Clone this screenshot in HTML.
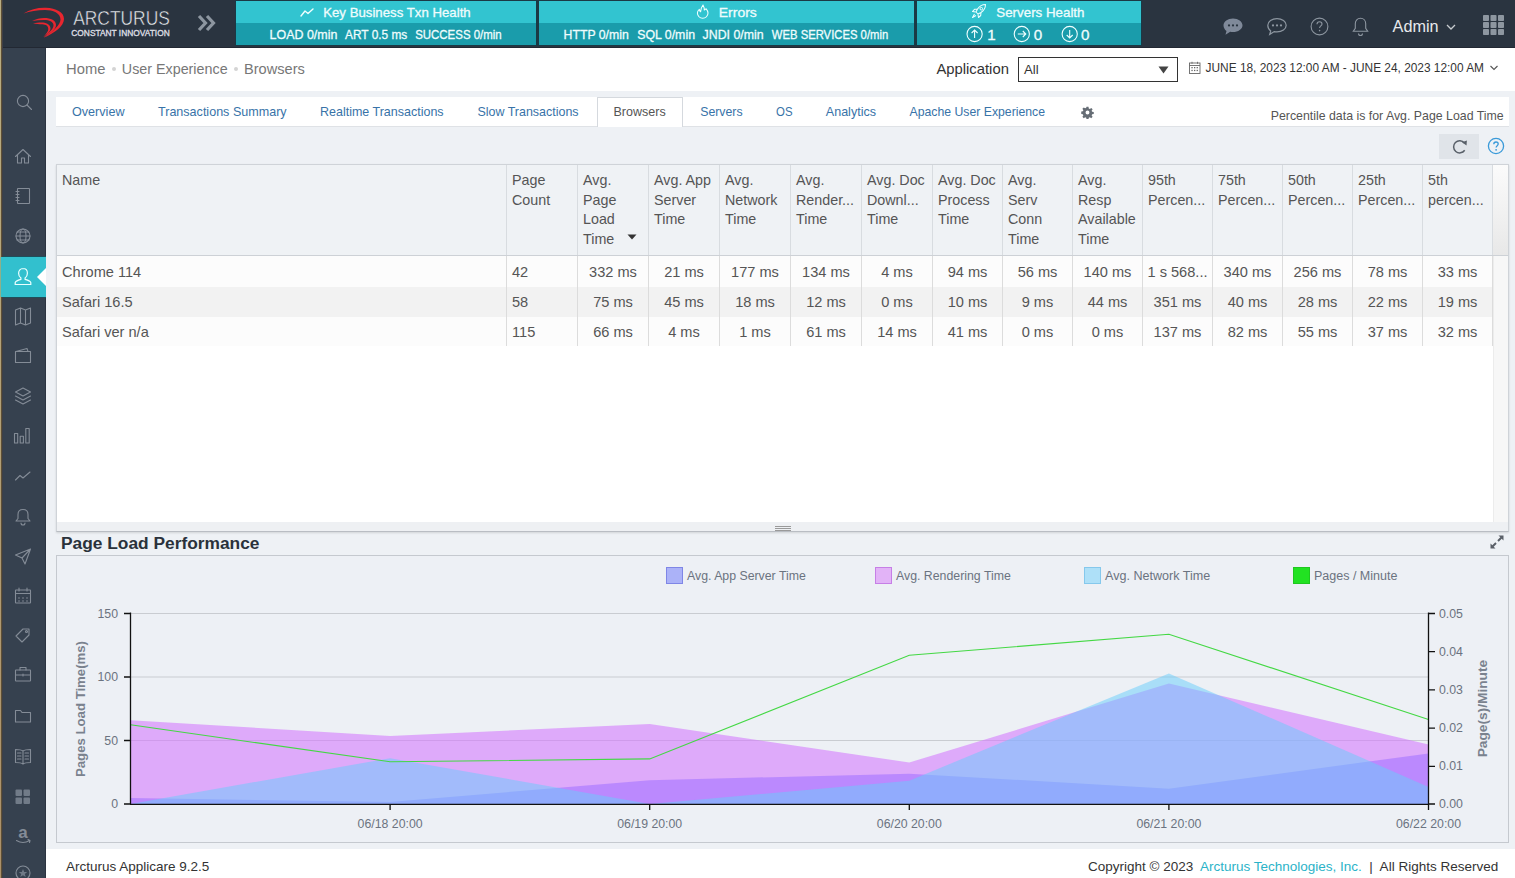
<!DOCTYPE html>
<html><head><meta charset="utf-8">
<style>
*{box-sizing:border-box;margin:0;padding:0}
html,body{width:1515px;height:878px;overflow:hidden}
body{position:relative;background:#eef1f5;font-family:"Liberation Sans",sans-serif;color:#555}
.a{position:absolute;white-space:nowrap}
#tx{position:absolute;left:0;top:0}
#tx text{font-family:"Liberation Sans",sans-serif}
</style></head><body>
<div class="a" style="left:0;top:0;width:1515px;height:48px;background:#2a3440;border-bottom:1px solid #222833"></div>
<div class="a" style="left:0;top:48px;width:46px;height:830px;background:#36414f;border-right:1px solid #2c3441"></div>
<div class="a" style="left:235px;top:0;width:907px;height:46px;background:#1b3945"></div>
<div class="a" style="left:236px;top:1px;width:300px;height:22px;background:#32c4d0"></div>
<div class="a" style="left:236px;top:23px;width:300px;height:22px;background:#1a9cab"></div>
<div class="a" style="left:539px;top:1px;width:375px;height:22px;background:#32c4d0"></div>
<div class="a" style="left:539px;top:23px;width:375px;height:22px;background:#1a9cab"></div>
<div class="a" style="left:917px;top:1px;width:224px;height:22px;background:#32c4d0"></div>
<div class="a" style="left:917px;top:23px;width:224px;height:22px;background:#1a9cab"></div>
<svg class="a" style="left:299px;top:5px" width="16" height="14" viewBox="0 0 16 14"><polyline points="2,11 6,6 9,8.5 14,4" fill="none" stroke="#f0ffff" stroke-width="1.4" stroke-linecap="round" stroke-linejoin="round"/></svg>
<svg class="a" style="left:695px;top:4px" width="16" height="16" viewBox="0 0 16 16"><path d="M8 1 C9 3 9.5 4.5 9.3 6 C10 5.5 10.8 5 11 4.7 C12.5 6.5 13 8 13 9 A5.3 5.3 0 0 1 2.4 9 C2.4 7.5 3.2 6.2 4.3 5.3 C4.5 6.5 5 7.3 5.6 7.8 C5.6 5.3 6.5 3 8 1z" fill="none" stroke="#f0ffff" stroke-width="1.05" stroke-linejoin="round"/></svg>
<svg class="a" style="left:971px;top:3px" width="16" height="16" viewBox="0 0 16 16"><path d="M14.5 1.5c-3.5 0-6 1.5-8 4.5l-1.5 3 2 2 3-1.5c3-2 4.5-4.5 4.5-8z M6.5 6l-3 0.3-2 2.2 3 0.5 M10 9.5l-0.3 3-2.2 2-0.5-3 M3.5 11l-2 3.5 3.5-2" fill="none" stroke="#f0ffff" stroke-width="1.05" stroke-linejoin="round"/><circle cx="10.3" cy="5.7" r="1.3" fill="none" stroke="#f0ffff" stroke-width="1"/></svg>
<svg class="a" style="left:965px;top:25px" width="130" height="18" viewBox="0 0 130 18">
<g fill="none" stroke="#f0ffff" stroke-width="1.1">
<circle cx="9.6" cy="9" r="7.6"/><path d="M9.6 13V5 M6.6 8l3-3 3 3"/>
<circle cx="56.8" cy="9" r="7.6"/><path d="M52.8 9h8 M57.8 6l3 3-3 3"/>
<circle cx="104.7" cy="9" r="7.6"/><path d="M104.7 5v8 M101.7 10l3 3 3-3"/>
</g></svg>
<svg class="a" style="left:0;top:0" width="80" height="47" viewBox="0 0 80 47"><g fill="#e8262f">
<path d="M23.5 13.5 C30 9.5 38 7.5 46 7.8 C56 8.2 64 12 64 19 C64 26 55 33 43.5 37.8 C53 31.5 60.5 25 60.5 19.5 C60.5 13 53 10 45 10 C37 10 30 11.5 23.5 13.5z"/>
<path d="M32 21 C36 19 40 18 44 18 C51 18 56 20.5 56 25 C56 29.5 50 34 44 37.2 C48.5 33 53.5 29 53.5 25.5 C53.5 21.5 49 20 44 20 C40 20 36 20.3 32 21z"/>
<path d="M33 23.5 C37 22.5 40 22.3 43 22.5 C47.5 23 50.5 25 50.5 28.5 C50.5 31.5 47 34.5 43.3 37.2 C46 34 48.3 31.5 48.3 29 C48.3 26 46 24.5 42.5 24.3 C39 24.1 36 24 33 23.5z"/>
</g></svg>
<svg class="a" style="left:196px;top:13px" width="22" height="20" viewBox="0 0 22 20"><path d="M3 3l6.5 7-6.5 7 M11 3l6.5 7-6.5 7" fill="none" stroke="#8d96a0" stroke-width="3.2" stroke-linejoin="miter"/></svg>
<!-- right header icons -->
<svg class="a" style="left:1221px;top:16px" width="24" height="21" viewBox="0 0 24 21"><path d="M12 2.5c5.2 0 9.5 3 9.5 6.8s-4.3 6.8-9.5 6.8c-1 0-1.9-0.1-2.8-0.3l-4.7 3 1-3.7C3.8 13.9 2.5 11.7 2.5 9.3 2.5 5.5 6.8 2.5 12 2.5z" fill="#7f8999"/><g fill="#2a3440"><circle cx="8" cy="9.4" r="1.1"/><circle cx="12" cy="9.4" r="1.1"/><circle cx="16" cy="9.4" r="1.1"/></g></svg>
<svg class="a" style="left:1265px;top:16px" width="24" height="21" viewBox="0 0 24 21"><path d="M12 2.7c5 0 9.2 2.9 9.2 6.6s-4.2 6.6-9.2 6.6c-1 0-1.9-0.1-2.8-0.3l-4.5 2.9 1-3.5C3.9 13.8 2.8 11.7 2.8 9.3 2.8 5.6 7 2.7 12 2.7z" fill="none" stroke="#8d96a0" stroke-width="1.2"/><g fill="#8d96a0"><circle cx="8" cy="9.4" r="1.1"/><circle cx="12" cy="9.4" r="1.1"/><circle cx="16" cy="9.4" r="1.1"/></g></svg>
<svg class="a" style="left:1309px;top:16px" width="21" height="21" viewBox="0 0 21 21"><circle cx="10.5" cy="10.5" r="8.4" fill="none" stroke="#8d96a0" stroke-width="1.1"/><path d="M8 8.3c0-1.5 1.1-2.5 2.5-2.5s2.5 1 2.5 2.3c0 1.8-2.4 1.9-2.4 3.9" fill="none" stroke="#8d96a0" stroke-width="1.1"/><circle cx="10.6" cy="14.6" r="0.8" fill="#8d96a0"/></svg>
<svg class="a" style="left:1351px;top:16px" width="19" height="21" viewBox="0 0 19 21"><path d="M9.5 2.2c-3.2 0-5.2 2.4-5.2 5.5v4.6l-2 3h14.4l-2-3V7.7c0-3.1-2-5.5-5.2-5.5z M7.5 17.5a2 2 0 0 0 4 0" fill="none" stroke="#8d96a0" stroke-width="1.1"/></svg>
<svg class="a" style="left:1445px;top:22px" width="12" height="10" viewBox="0 0 12 10"><path d="M2 3l4 4 4-4" fill="none" stroke="#c8ccd0" stroke-width="1.3"/></svg>
<svg class="a" style="left:1482px;top:14px" width="23" height="22" viewBox="0 0 23 22"><g fill="#8d96a0">
<rect x="1" y="1" width="6" height="6" rx="0.8"/><rect x="8.5" y="1" width="6" height="6" rx="0.8"/><rect x="16" y="1" width="6" height="6" rx="0.8"/>
<rect x="1" y="8" width="6" height="6" rx="0.8"/><rect x="8.5" y="8" width="6" height="6" rx="0.8"/><rect x="16" y="8" width="6" height="6" rx="0.8"/>
<rect x="1" y="15" width="6" height="6" rx="0.8"/><rect x="8.5" y="15" width="6" height="6" rx="0.8"/><rect x="16" y="15" width="6" height="6" rx="0.8"/>
</g></svg>


<!-- sidebar -->
<div class="a" style="left:0;top:257px;width:46px;height:40px;background:#32c0ce"></div>
<div class="a" style="left:0;top:256px;width:46px;height:1px;background:#1f4e5a"></div>
<div class="a" style="left:0;top:297px;width:46px;height:1px;background:#1f4e5a"></div>
<svg class="a" style="left:37px;top:268px" width="9" height="18" viewBox="0 0 9 18"><path d="M9 0L0 9l9 9z" fill="#fff"/></svg>
<svg class="a" style="left:0;top:47px" width="46" height="831" viewBox="0 47 46 831">
<g fill="none" stroke="#848c97" stroke-width="1.1" stroke-linejoin="round" stroke-linecap="round">
<!-- search -->
<circle cx="23" cy="101" r="5.6"/><path d="M27 105l4.5 4.5"/>
<!-- home -->
<path d="M15.5 156.5l7.5-7 7.5 7 M17.5 155v8h4v-5h3v5h4v-8"/>
<!-- notebook -->
<rect x="17.5" y="188.5" width="12" height="15" rx="0.5"/><path d="M16 191.5h3 M16 194.5h3 M16 197.5h3 M16 200.5h3"/>
<!-- globe -->
<circle cx="23" cy="236" r="7"/><ellipse cx="23" cy="236" rx="3" ry="7"/><path d="M16 236h14 M17 232h12 M17 240h12"/>
<!-- map -->
<path d="M15.5 310l5-2 5 2 5-2v15l-5 2-5-2-5 2z M20.5 308v15 M25.5 310v15"/>
<!-- wallet -->
<path d="M16 351.5l11-3 1 3 M15.5 351.5h15v11h-15z"/>
<!-- layers -->
<path d="M23 388l7.5 4-7.5 4-7.5-4z M15.5 396l7.5 4 7.5-4 M15.5 400l7.5 4 7.5-4"/>
<!-- bar chart -->
<path d="M14.5 443v-9.5h3.2v9.5z M20.2 443v-6.8h3.2v6.8z M25.8 443v-14.5h3.4v14.5z"/>
<!-- line chart -->
<path d="M15.5 480l4.5-4.5 3 2.5 7-6"/>
<!-- bell -->
<path d="M23 509.5c-3 0-5 2-5 5v4l-2 2.5h14l-2-2.5v-4c0-3-2-5-5-5z M21 523a2 2 0 0 0 4 0"/>
<!-- send -->
<path d="M15.5 555l15-6-5.5 15-3-6z M22 558l8.5-9"/>
<!-- calendar -->
<rect x="15.5" y="590" width="15" height="13" rx="0.5"/><path d="M15.5 593.5h15 M19 588v3 M27 588v3"/>
<!-- tag -->
<path d="M16 636l7-7h6v6l-7 7z"/><circle cx="26.5" cy="631.5" r="1"/>
<!-- briefcase -->
<rect x="15.5" y="670" width="15" height="11" rx="0.5"/><path d="M20 670v-2.5h6v2.5 M15.5 675h15 M23 674v2"/>
<!-- folder -->
<path d="M15.5 710.5h5l1.5 2h8.5v9.5h-15z"/>
<!-- book -->
<path d="M15.5 749.5c3 0 5.5 0 7.5 1.5 2-1.5 4.5-1.5 7.5-1.5v13c-3 0-5.5 0-7.5 1.5-2-1.5-4.5-1.5-7.5-1.5z M23 751v12.5 M17.5 753h3.5 M17.5 756h3.5 M17.5 759h3.5 M25 753h3.5 M25 756h3.5 M25 759h3.5"/>
<!-- amazon -->
<path d="M16.5 840.5c4 2.5 9 2.5 13 0 M28 839.5l2 1-0.5 2"/>
<!-- star circle -->
<circle cx="23" cy="873" r="7"/>
</g>
<g fill="#848c97">
<rect x="15.5" y="789.5" width="6.5" height="6.5" rx="1" fill="#717b88"/><rect x="23.5" y="789.5" width="6.5" height="6.5" rx="1" fill="#717b88"/>
<rect x="15.5" y="797.5" width="6.5" height="6.5" rx="1" fill="#717b88"/><rect x="23.5" y="797.5" width="6.5" height="6.5" rx="1" fill="#717b88"/>
<circle cx="19" cy="598" r="0.8"/><circle cx="23" cy="598" r="0.8"/><circle cx="27" cy="598" r="0.8"/>
<circle cx="19" cy="601" r="0.8"/><circle cx="23" cy="601" r="0.8"/><circle cx="27" cy="601" r="0.8"/>
</g>
<text x="23" y="838" text-anchor="middle" font-family="Liberation Sans" font-size="17" font-weight="bold" fill="#848c97">a</text><path d="M23 869l1.2 3h3l-2.4 2 1 3-2.8-1.8-2.8 1.8 1-3-2.4-2h3z" fill="#6f7986"/>
</svg>
<!-- user icon active -->
<svg class="a" style="left:12px;top:266px" width="22" height="22" viewBox="0 0 22 22"><path d="M11 2.5c-2.6 0-4.4 2-4.4 4.8 0 2.2 1 3.8 2.3 4.6v1.5c-3 0.8-5.5 1.8-5.7 3.3V18.5h15.6v-1.8c-0.2-1.5-2.7-2.5-5.7-3.3v-1.5c1.3-0.8 2.3-2.4 2.3-4.6 0-2.8-1.8-4.8-4.4-4.8z" fill="none" stroke="#eaffff" stroke-width="1.2"/></svg>


<div class="a" style="left:46px;top:48px;width:1469px;height:43px;background:#fff"></div>
<div class="a" style="left:111.5px;top:67px;width:4px;height:4px;border-radius:2px;background:#d4d4d4"></div>
<div class="a" style="left:233.8px;top:67px;width:4px;height:4px;border-radius:2px;background:#d4d4d4"></div>
<div class="a" style="left:1018px;top:57px;width:160px;height:25px;border:1px solid #333;background:#fff"></div>
<svg class="a" style="left:1158px;top:66px" width="11" height="8" viewBox="0 0 11 8"><path d="M0.5 0.5h10l-5 7z" fill="#444"/></svg>
<svg class="a" style="left:1188px;top:61px" width="13" height="13" viewBox="0 0 13 13"><g fill="none" stroke="#666" stroke-width="0.9"><rect x="1.5" y="2" width="10.5" height="10.5"/><path d="M1.5 4.5h10.5 M4 0.8v2 M9.5 0.8v2"/></g><g fill="#666"><rect x="3.4" y="6" width="1.3" height="1.3"/><rect x="6" y="6" width="1.3" height="1.3"/><rect x="8.6" y="6" width="1.3" height="1.3"/><rect x="3.4" y="8.8" width="1.3" height="1.3"/><rect x="6" y="8.8" width="1.3" height="1.3"/><rect x="8.6" y="8.8" width="1.3" height="1.3"/></g></svg>
<svg class="a" style="left:1489px;top:64px" width="10" height="8" viewBox="0 0 10 8"><path d="M1.5 2l3.5 3.5 3.5-3.5" fill="none" stroke="#555" stroke-width="1.1"/></svg>
<div class="a" style="left:56px;top:97px;width:1453px;height:30px;background:#fff;border-bottom:1px solid #dfe2e6"></div>
<div class="a" style="left:597px;top:97px;width:86px;height:30px;background:#fff;border:1px solid #d5d9de;border-bottom:none"></div>
<svg class="a" style="left:1080.5px;top:105.5px" width="13" height="13" viewBox="0 0 16 16"><path fill="#666d75" fill-rule="evenodd" d="M6.8 1h2.4l0.4 2 1.3 0.6 1.7-1.2 1.7 1.7-1.2 1.7 0.6 1.3 2 0.4v2.4l-2 0.4-0.6 1.3 1.2 1.7-1.7 1.7-1.7-1.2-1.3 0.6-0.4 2H6.8l-0.4-2-1.3-0.6-1.7 1.2-1.7-1.7 1.2-1.7-0.6-1.3-2-0.4V6.8l2-0.4 0.6-1.3-1.2-1.7 1.7-1.7 1.7 1.2 1.3-0.6z M8 5.6a2.4 2.4 0 1 0 0 4.8 2.4 2.4 0 1 0 0-4.8z"/></svg>
<div class="a" style="left:1439px;top:134px;width:40px;height:25px;background:#e0e4e9"></div>
<svg class="a" style="left:1451px;top:138px" width="17" height="17" viewBox="0 0 17 17"><path d="M13.4 4.9A6.1 6.1 0 1 0 13.7 12.3" fill="none" stroke="#585f68" stroke-width="1.5"/><path d="M11 4.3L15.9 2.4l-0.4 5z" fill="#585f68"/></svg>
<svg class="a" style="left:1487px;top:137px" width="18" height="18" viewBox="0 0 18 18"><circle cx="9" cy="9" r="7.6" fill="none" stroke="#3a9ad9" stroke-width="1.3"/><path d="M6.8 7.2c0-1.3 1-2.2 2.2-2.2s2.2 0.9 2.2 2c0 1.6-2.1 1.7-2.1 3.5" fill="none" stroke="#3a9ad9" stroke-width="1.3"/><circle cx="9.1" cy="12.8" r="0.9" fill="#3a9ad9"/></svg>
<div class="a" style="left:56px;top:164px;width:1453px;height:368px;background:#eef0f3;border:1px solid #cfd3d8;border-bottom-color:#b9bdc3;box-shadow:0 1px 2px rgba(0,0,0,0.12)"></div>
<div class="a" style="left:57px;top:165px;width:1451px;height:90px;background:#eff2f5"></div>
<div class="a" style="left:1493px;top:165px;width:15px;height:90px;background:linear-gradient(#fbfbfb,#e8e8e8)"></div>
<div class="a" style="left:57px;top:255px;width:1451px;height:1px;background:#cdd1d6"></div>
<div class="a" style="left:57px;top:256px;width:1436px;height:266px;background:#fff"></div>
<div class="a" style="left:1493px;top:256px;width:15px;height:266px;background:#f7f7f7;border-left:1px solid #ececec"></div>
<div class="a" style="left:57px;top:256px;width:1436px;height:31px;background:#fcfcfc"></div>
<div class="a" style="left:57px;top:287px;width:1436px;height:30px;background:#f2f2f2"></div>
<div class="a" style="left:57px;top:317px;width:1436px;height:29px;background:#fcfcfc"></div>
<div class="a" style="left:506px;top:165px;width:1px;height:90px;background:#d8dce0"></div>
<div class="a" style="left:506px;top:256px;width:1px;height:90px;background:#dcdcdc"></div>
<div class="a" style="left:577px;top:165px;width:1px;height:90px;background:#d8dce0"></div>
<div class="a" style="left:577px;top:256px;width:1px;height:90px;background:#dcdcdc"></div>
<div class="a" style="left:648px;top:165px;width:1px;height:90px;background:#d8dce0"></div>
<div class="a" style="left:648px;top:256px;width:1px;height:90px;background:#dcdcdc"></div>
<div class="a" style="left:719px;top:165px;width:1px;height:90px;background:#d8dce0"></div>
<div class="a" style="left:719px;top:256px;width:1px;height:90px;background:#dcdcdc"></div>
<div class="a" style="left:790px;top:165px;width:1px;height:90px;background:#d8dce0"></div>
<div class="a" style="left:790px;top:256px;width:1px;height:90px;background:#dcdcdc"></div>
<div class="a" style="left:861px;top:165px;width:1px;height:90px;background:#d8dce0"></div>
<div class="a" style="left:861px;top:256px;width:1px;height:90px;background:#dcdcdc"></div>
<div class="a" style="left:932px;top:165px;width:1px;height:90px;background:#d8dce0"></div>
<div class="a" style="left:932px;top:256px;width:1px;height:90px;background:#dcdcdc"></div>
<div class="a" style="left:1002px;top:165px;width:1px;height:90px;background:#d8dce0"></div>
<div class="a" style="left:1002px;top:256px;width:1px;height:90px;background:#dcdcdc"></div>
<div class="a" style="left:1072px;top:165px;width:1px;height:90px;background:#d8dce0"></div>
<div class="a" style="left:1072px;top:256px;width:1px;height:90px;background:#dcdcdc"></div>
<div class="a" style="left:1142px;top:165px;width:1px;height:90px;background:#d8dce0"></div>
<div class="a" style="left:1142px;top:256px;width:1px;height:90px;background:#dcdcdc"></div>
<div class="a" style="left:1212px;top:165px;width:1px;height:90px;background:#d8dce0"></div>
<div class="a" style="left:1212px;top:256px;width:1px;height:90px;background:#dcdcdc"></div>
<div class="a" style="left:1282px;top:165px;width:1px;height:90px;background:#d8dce0"></div>
<div class="a" style="left:1282px;top:256px;width:1px;height:90px;background:#dcdcdc"></div>
<div class="a" style="left:1352px;top:165px;width:1px;height:90px;background:#d8dce0"></div>
<div class="a" style="left:1352px;top:256px;width:1px;height:90px;background:#dcdcdc"></div>
<div class="a" style="left:1422px;top:165px;width:1px;height:90px;background:#d8dce0"></div>
<div class="a" style="left:1422px;top:256px;width:1px;height:90px;background:#dcdcdc"></div>
<div class="a" style="left:1492px;top:165px;width:1px;height:90px;background:#d8dce0"></div>
<div class="a" style="left:1492px;top:256px;width:1px;height:90px;background:#dcdcdc"></div>
<svg class="a" style="left:627px;top:234px" width="10" height="6" viewBox="0 0 10 6"><path d="M0.5 0.5h9l-4.5 5z" fill="#333"/></svg>
<svg class="a" style="left:775px;top:526px" width="16" height="6" viewBox="0 0 16 6"><path d="M0 0.5h16 M0 2.5h16 M0 4.5h16" stroke="#9a9a9a" stroke-width="1"/></svg>
<svg class="a" style="left:1490px;top:535px" width="14" height="14" viewBox="0 0 14 14"><g fill="#5a6068"><path d="M13.5 0.5v5l-1.8-1.8-3 3-1.4-1.4 3-3L8.5 0.5z M0.5 13.5v-5l1.8 1.8 3-3 1.4 1.4-3 3 1.8 1.8z"/></g></svg>
<div class="a" style="left:56px;top:555px;width:1453px;height:288px;background:#edf0f5;border:1px solid #c5c9cf"></div>
<svg class="a" style="left:0;top:0" width="1515" height="878" viewBox="0 0 1515 878">
<path d="M130 613.5H1428 M130 677H1428 M130 740.5H1428" stroke="#c9ccd1" stroke-width="1"/>
<polygon points="130.5,804 130.5,720.2 390.1,735.9 649.7,724.0 909.3,762.5 1168.9,683.5 1428.5,744.4 1428.5,804" fill="rgb(210,121,253)" fill-opacity="0.59"/>
<polygon points="130.5,804 130.5,798.0 390.1,802.0 649.7,780.2 909.3,773.7 1168.9,788.7 1428.5,753.4 1428.5,804" fill="rgb(172,124,255)" fill-opacity="0.71"/>
<polygon points="130.5,804 130.5,804.0 390.1,758.2 649.7,804.0 909.3,780.7 1168.9,673.4 1428.5,786.9 1428.5,804" fill="rgb(103,204,252)" fill-opacity="0.51"/>
<polyline points="130.5,724.8 390.1,761.8 649.7,758.9 909.3,655.3 1168.9,634.3 1428.5,719.4" fill="none" stroke="#44d844" stroke-width="1.1"/>
<g stroke="#111" stroke-width="1.3" fill="none">
<path d="M130.5 612.5V804.5 M124 613.5H130.5 M124 677H130.5 M124 740.5H130.5 M124 804H130.5"/>
<path d="M1428.5 612.5V804.5 M1428.5 613.5H1435 M1428.5 651.7H1435 M1428.5 689.9H1435 M1428.5 728.1H1435 M1428.5 766.3H1435 M1428.5 804H1435"/>
<path d="M130 804.3H1428"/>
<path d="M390.1 804V810 M649.7 804V810 M909.3 804V810 M1168.9 804V810 M1428.5 804V810"/>
</g>
<g stroke="#7f86e6" stroke-width="1"><rect x="666.5" y="567.5" width="16" height="16" fill="#abb2f8"/></g>
<rect x="875.5" y="567.5" width="16" height="16" fill="#e2b3f7" stroke="#c67fe6"/>
<rect x="1084.5" y="567.5" width="16" height="16" fill="#aee0f8" stroke="#85c8ec"/>
<rect x="1293.5" y="567.5" width="16" height="16" fill="#22e222" stroke="#1fc81f"/>
</svg>
<div class="a" style="left:46px;top:849px;width:1469px;height:29px;background:#fff"></div>
<div class="a" style="left:0;top:0;width:1px;height:878px;background:linear-gradient(#b9ad82,#ab9069)"></div><div class="a" style="left:1px;top:0;width:1px;height:878px;background:#5e5036"></div><div class="a" style="left:2px;top:0;width:1px;height:878px;background:#3f3f46"></div><div class="a" style="left:0;top:257px;width:1px;height:40px;background:#8fb08a"></div><div class="a" style="left:1px;top:257px;width:2px;height:40px;background:#32c0ce"></div>
<svg id="tx" width="1515" height="878" viewBox="0 0 1515 878">
<text x="323.2" y="16.8" font-size="13.6" fill="#effcfd" text-anchor="start" textLength="147.5" lengthAdjust="spacingAndGlyphs" stroke="#effcfd" stroke-width="0.3">Key Business Txn Health</text>
<text x="269.6" y="38.6" font-size="12.6" fill="#effcfd" text-anchor="start" textLength="67.8" lengthAdjust="spacingAndGlyphs" stroke="#effcfd" stroke-width="0.3">LOAD 0/min</text>
<text x="345" y="38.6" font-size="12.6" fill="#effcfd" text-anchor="start" textLength="62.3" lengthAdjust="spacingAndGlyphs" stroke="#effcfd" stroke-width="0.3">ART 0.5 ms</text>
<text x="415.2" y="38.6" font-size="12.6" fill="#effcfd" text-anchor="start" textLength="86.5" lengthAdjust="spacingAndGlyphs" stroke="#effcfd" stroke-width="0.3">SUCCESS 0/min</text>
<text x="718.8" y="16.8" font-size="13.6" fill="#effcfd" text-anchor="start" textLength="38" lengthAdjust="spacingAndGlyphs" stroke="#effcfd" stroke-width="0.3">Errors</text>
<text x="563.6" y="38.6" font-size="12.6" fill="#effcfd" text-anchor="start" textLength="65.2" lengthAdjust="spacingAndGlyphs" stroke="#effcfd" stroke-width="0.3">HTTP 0/min</text>
<text x="637.2" y="38.6" font-size="12.6" fill="#effcfd" text-anchor="start" textLength="57.8" lengthAdjust="spacingAndGlyphs" stroke="#effcfd" stroke-width="0.3">SQL 0/min</text>
<text x="702.6" y="38.6" font-size="12.6" fill="#effcfd" text-anchor="start" textLength="61" lengthAdjust="spacingAndGlyphs" stroke="#effcfd" stroke-width="0.3">JNDI 0/min</text>
<text x="771.8" y="38.6" font-size="12.6" fill="#effcfd" text-anchor="start" textLength="116.4" lengthAdjust="spacingAndGlyphs" stroke="#effcfd" stroke-width="0.3">WEB SERVICES 0/min</text>
<text x="996.3" y="16.6" font-size="13.6" fill="#effcfd" text-anchor="start" textLength="88.2" lengthAdjust="spacingAndGlyphs" stroke="#effcfd" stroke-width="0.3">Servers Health</text>
<text x="987.2" y="40.4" font-size="15.2" fill="#effcfd" text-anchor="start" stroke="#effcfd" stroke-width="0.3">1</text>
<text x="1033.8" y="40.4" font-size="15.2" fill="#effcfd" text-anchor="start" stroke="#effcfd" stroke-width="0.3">0</text>
<text x="1080.9" y="40.4" font-size="15.2" fill="#effcfd" text-anchor="start" stroke="#effcfd" stroke-width="0.3">0</text>
<text x="73.2" y="25.2" font-size="19.8" fill="#eceef2" text-anchor="start" textLength="96.6" lengthAdjust="spacingAndGlyphs" stroke="#2a3440" stroke-width="0.5">ARCTURUS</text>
<text x="71.3" y="36" font-size="8.6" fill="#dcdde2" text-anchor="start" textLength="98.4" lengthAdjust="spacingAndGlyphs" stroke="#dcdde2" stroke-width="0.35">CONSTANT INNOVATION</text>
<text x="1392.6" y="32.2" font-size="16" fill="#e8eaed" text-anchor="start" textLength="46" lengthAdjust="spacingAndGlyphs">Admin</text>
<text x="66" y="73.7" font-size="14.6" fill="#777" text-anchor="start" textLength="39.4" lengthAdjust="spacingAndGlyphs">Home</text>
<text x="121.8" y="73.7" font-size="14.6" fill="#777" text-anchor="start" textLength="105.8" lengthAdjust="spacingAndGlyphs">User Experience</text>
<text x="244" y="73.7" font-size="14.6" fill="#777" text-anchor="start" textLength="60.8" lengthAdjust="spacingAndGlyphs">Browsers</text>
<text x="936.4" y="74.2" font-size="14.6" fill="#333" text-anchor="start" textLength="72.5" lengthAdjust="spacingAndGlyphs">Application</text>
<text x="1024" y="73.8" font-size="13.2" fill="#333" text-anchor="start">All</text>
<text x="1205.6" y="72.4" font-size="12.8" fill="#333" text-anchor="start" textLength="278.4" lengthAdjust="spacingAndGlyphs">JUNE 18, 2023 12:00 AM - JUNE 24, 2023 12:00 AM</text>
<text x="72" y="116.2" font-size="13" fill="#3873a8" text-anchor="start" textLength="52.5" lengthAdjust="spacingAndGlyphs">Overview</text>
<text x="158" y="116.2" font-size="13" fill="#3873a8" text-anchor="start" textLength="128.6" lengthAdjust="spacingAndGlyphs">Transactions Summary</text>
<text x="320" y="116.2" font-size="13" fill="#3873a8" text-anchor="start" textLength="123.6" lengthAdjust="spacingAndGlyphs">Realtime Transactions</text>
<text x="477.4" y="116.2" font-size="13" fill="#3873a8" text-anchor="start" textLength="101.2" lengthAdjust="spacingAndGlyphs">Slow Transactions</text>
<text x="613.5" y="116.2" font-size="13" fill="#555" text-anchor="start" textLength="52.2" lengthAdjust="spacingAndGlyphs">Browsers</text>
<text x="700.2" y="116.2" font-size="13" fill="#3873a8" text-anchor="start" textLength="42.4" lengthAdjust="spacingAndGlyphs">Servers</text>
<text x="776" y="116.2" font-size="13" fill="#3873a8" text-anchor="start" textLength="16.5" lengthAdjust="spacingAndGlyphs">OS</text>
<text x="825.8" y="116.2" font-size="13" fill="#3873a8" text-anchor="start" textLength="50.2" lengthAdjust="spacingAndGlyphs">Analytics</text>
<text x="909.5" y="116.2" font-size="13" fill="#3873a8" text-anchor="start" textLength="135.5" lengthAdjust="spacingAndGlyphs">Apache User Experience</text>
<text x="1270.7" y="119.9" font-size="12.8" fill="#555" text-anchor="start" textLength="233" lengthAdjust="spacingAndGlyphs">Percentile data is for Avg. Page Load Time</text>
<text x="62" y="185" font-size="14.3" fill="#555" text-anchor="start">Name</text>
<text x="512" y="185.0" font-size="14.3" fill="#555" text-anchor="start">Page</text>
<text x="512" y="204.7" font-size="14.3" fill="#555" text-anchor="start">Count</text>
<text x="583" y="185.0" font-size="14.3" fill="#555" text-anchor="start">Avg.</text>
<text x="583" y="204.7" font-size="14.3" fill="#555" text-anchor="start">Page</text>
<text x="583" y="224.4" font-size="14.3" fill="#555" text-anchor="start">Load</text>
<text x="583" y="244.1" font-size="14.3" fill="#555" text-anchor="start">Time</text>
<text x="654" y="185.0" font-size="14.3" fill="#555" text-anchor="start">Avg. App</text>
<text x="654" y="204.7" font-size="14.3" fill="#555" text-anchor="start">Server</text>
<text x="654" y="224.4" font-size="14.3" fill="#555" text-anchor="start">Time</text>
<text x="725" y="185.0" font-size="14.3" fill="#555" text-anchor="start">Avg.</text>
<text x="725" y="204.7" font-size="14.3" fill="#555" text-anchor="start">Network</text>
<text x="725" y="224.4" font-size="14.3" fill="#555" text-anchor="start">Time</text>
<text x="796" y="185.0" font-size="14.3" fill="#555" text-anchor="start">Avg.</text>
<text x="796" y="204.7" font-size="14.3" fill="#555" text-anchor="start">Render...</text>
<text x="796" y="224.4" font-size="14.3" fill="#555" text-anchor="start">Time</text>
<text x="867" y="185.0" font-size="14.3" fill="#555" text-anchor="start">Avg. Doc</text>
<text x="867" y="204.7" font-size="14.3" fill="#555" text-anchor="start">Downl...</text>
<text x="867" y="224.4" font-size="14.3" fill="#555" text-anchor="start">Time</text>
<text x="938" y="185.0" font-size="14.3" fill="#555" text-anchor="start">Avg. Doc</text>
<text x="938" y="204.7" font-size="14.3" fill="#555" text-anchor="start">Process</text>
<text x="938" y="224.4" font-size="14.3" fill="#555" text-anchor="start">Time</text>
<text x="1008" y="185.0" font-size="14.3" fill="#555" text-anchor="start">Avg.</text>
<text x="1008" y="204.7" font-size="14.3" fill="#555" text-anchor="start">Serv</text>
<text x="1008" y="224.4" font-size="14.3" fill="#555" text-anchor="start">Conn</text>
<text x="1008" y="244.1" font-size="14.3" fill="#555" text-anchor="start">Time</text>
<text x="1078" y="185.0" font-size="14.3" fill="#555" text-anchor="start">Avg.</text>
<text x="1078" y="204.7" font-size="14.3" fill="#555" text-anchor="start">Resp</text>
<text x="1078" y="224.4" font-size="14.3" fill="#555" text-anchor="start">Available</text>
<text x="1078" y="244.1" font-size="14.3" fill="#555" text-anchor="start">Time</text>
<text x="1148" y="185.0" font-size="14.3" fill="#555" text-anchor="start">95th</text>
<text x="1148" y="204.7" font-size="14.3" fill="#555" text-anchor="start">Percen...</text>
<text x="1218" y="185.0" font-size="14.3" fill="#555" text-anchor="start">75th</text>
<text x="1218" y="204.7" font-size="14.3" fill="#555" text-anchor="start">Percen...</text>
<text x="1288" y="185.0" font-size="14.3" fill="#555" text-anchor="start">50th</text>
<text x="1288" y="204.7" font-size="14.3" fill="#555" text-anchor="start">Percen...</text>
<text x="1358" y="185.0" font-size="14.3" fill="#555" text-anchor="start">25th</text>
<text x="1358" y="204.7" font-size="14.3" fill="#555" text-anchor="start">Percen...</text>
<text x="1428" y="185.0" font-size="14.3" fill="#555" text-anchor="start">5th</text>
<text x="1428" y="204.7" font-size="14.3" fill="#555" text-anchor="start">percen...</text>
<text x="62" y="277" font-size="14.6" fill="#555" text-anchor="start">Chrome 114</text>
<text x="512" y="277" font-size="14.6" fill="#555" text-anchor="start">42</text>
<text x="613.0" y="277" font-size="14.6" fill="#555" text-anchor="middle">332 ms</text>
<text x="684.0" y="277" font-size="14.6" fill="#555" text-anchor="middle">21 ms</text>
<text x="755.0" y="277" font-size="14.6" fill="#555" text-anchor="middle">177 ms</text>
<text x="826.0" y="277" font-size="14.6" fill="#555" text-anchor="middle">134 ms</text>
<text x="897.0" y="277" font-size="14.6" fill="#555" text-anchor="middle">4 ms</text>
<text x="967.5" y="277" font-size="14.6" fill="#555" text-anchor="middle">94 ms</text>
<text x="1037.5" y="277" font-size="14.6" fill="#555" text-anchor="middle">56 ms</text>
<text x="1107.5" y="277" font-size="14.6" fill="#555" text-anchor="middle">140 ms</text>
<text x="1177.5" y="277" font-size="14.6" fill="#555" text-anchor="middle">1 s 568...</text>
<text x="1247.5" y="277" font-size="14.6" fill="#555" text-anchor="middle">340 ms</text>
<text x="1317.5" y="277" font-size="14.6" fill="#555" text-anchor="middle">256 ms</text>
<text x="1387.5" y="277" font-size="14.6" fill="#555" text-anchor="middle">78 ms</text>
<text x="1457.5" y="277" font-size="14.6" fill="#555" text-anchor="middle">33 ms</text>
<text x="62" y="307" font-size="14.6" fill="#555" text-anchor="start">Safari 16.5</text>
<text x="512" y="307" font-size="14.6" fill="#555" text-anchor="start">58</text>
<text x="613.0" y="307" font-size="14.6" fill="#555" text-anchor="middle">75 ms</text>
<text x="684.0" y="307" font-size="14.6" fill="#555" text-anchor="middle">45 ms</text>
<text x="755.0" y="307" font-size="14.6" fill="#555" text-anchor="middle">18 ms</text>
<text x="826.0" y="307" font-size="14.6" fill="#555" text-anchor="middle">12 ms</text>
<text x="897.0" y="307" font-size="14.6" fill="#555" text-anchor="middle">0 ms</text>
<text x="967.5" y="307" font-size="14.6" fill="#555" text-anchor="middle">10 ms</text>
<text x="1037.5" y="307" font-size="14.6" fill="#555" text-anchor="middle">9 ms</text>
<text x="1107.5" y="307" font-size="14.6" fill="#555" text-anchor="middle">44 ms</text>
<text x="1177.5" y="307" font-size="14.6" fill="#555" text-anchor="middle">351 ms</text>
<text x="1247.5" y="307" font-size="14.6" fill="#555" text-anchor="middle">40 ms</text>
<text x="1317.5" y="307" font-size="14.6" fill="#555" text-anchor="middle">28 ms</text>
<text x="1387.5" y="307" font-size="14.6" fill="#555" text-anchor="middle">22 ms</text>
<text x="1457.5" y="307" font-size="14.6" fill="#555" text-anchor="middle">19 ms</text>
<text x="62" y="337" font-size="14.6" fill="#555" text-anchor="start">Safari ver n/a</text>
<text x="512" y="337" font-size="14.6" fill="#555" text-anchor="start">115</text>
<text x="613.0" y="337" font-size="14.6" fill="#555" text-anchor="middle">66 ms</text>
<text x="684.0" y="337" font-size="14.6" fill="#555" text-anchor="middle">4 ms</text>
<text x="755.0" y="337" font-size="14.6" fill="#555" text-anchor="middle">1 ms</text>
<text x="826.0" y="337" font-size="14.6" fill="#555" text-anchor="middle">61 ms</text>
<text x="897.0" y="337" font-size="14.6" fill="#555" text-anchor="middle">14 ms</text>
<text x="967.5" y="337" font-size="14.6" fill="#555" text-anchor="middle">41 ms</text>
<text x="1037.5" y="337" font-size="14.6" fill="#555" text-anchor="middle">0 ms</text>
<text x="1107.5" y="337" font-size="14.6" fill="#555" text-anchor="middle">0 ms</text>
<text x="1177.5" y="337" font-size="14.6" fill="#555" text-anchor="middle">137 ms</text>
<text x="1247.5" y="337" font-size="14.6" fill="#555" text-anchor="middle">82 ms</text>
<text x="1317.5" y="337" font-size="14.6" fill="#555" text-anchor="middle">55 ms</text>
<text x="1387.5" y="337" font-size="14.6" fill="#555" text-anchor="middle">37 ms</text>
<text x="1457.5" y="337" font-size="14.6" fill="#555" text-anchor="middle">32 ms</text>
<text x="61" y="549" font-size="17.2" fill="#2a323b" font-weight="bold" text-anchor="start" textLength="198.5" lengthAdjust="spacingAndGlyphs">Page Load Performance</text>
<text x="118" y="617.5" font-size="12.3" fill="#6b7380" text-anchor="end">150</text>
<text x="118" y="681" font-size="12.3" fill="#6b7380" text-anchor="end">100</text>
<text x="118" y="744.5" font-size="12.3" fill="#6b7380" text-anchor="end">50</text>
<text x="118" y="808" font-size="12.3" fill="#6b7380" text-anchor="end">0</text>
<text x="1439" y="617.5" font-size="12.3" fill="#6b7380" text-anchor="start">0.05</text>
<text x="1439" y="655.7" font-size="12.3" fill="#6b7380" text-anchor="start">0.04</text>
<text x="1439" y="693.9" font-size="12.3" fill="#6b7380" text-anchor="start">0.03</text>
<text x="1439" y="732.1" font-size="12.3" fill="#6b7380" text-anchor="start">0.02</text>
<text x="1439" y="770.3" font-size="12.3" fill="#6b7380" text-anchor="start">0.01</text>
<text x="1439" y="808" font-size="12.3" fill="#6b7380" text-anchor="start">0.00</text>
<text x="390.1" y="828" font-size="12.3" fill="#6b7380" text-anchor="middle">06/18 20:00</text>
<text x="649.7" y="828" font-size="12.3" fill="#6b7380" text-anchor="middle">06/19 20:00</text>
<text x="909.3000000000001" y="828" font-size="12.3" fill="#6b7380" text-anchor="middle">06/20 20:00</text>
<text x="1168.9" y="828" font-size="12.3" fill="#6b7380" text-anchor="middle">06/21 20:00</text>
<text x="1428.5" y="828" font-size="12.3" fill="#6b7380" text-anchor="middle">06/22 20:00</text>
<text x="0" y="0" font-size="13" fill="#7a828e" font-weight="bold" text-anchor="middle" textLength="136" lengthAdjust="spacingAndGlyphs" transform="translate(85,709) rotate(-90)">Pages Load Time(ms)</text>
<text x="0" y="0" font-size="13" fill="#7a828e" font-weight="bold" text-anchor="middle" textLength="97.5" lengthAdjust="spacingAndGlyphs" transform="translate(1487,708.6) rotate(-90)">Page(s)/Minute</text>
<text x="687" y="580" font-size="12.5" fill="#6b7380" text-anchor="start" textLength="118.8" lengthAdjust="spacingAndGlyphs">Avg. App Server Time</text>
<text x="896" y="580" font-size="12.5" fill="#6b7380" text-anchor="start" textLength="114.8" lengthAdjust="spacingAndGlyphs">Avg. Rendering Time</text>
<text x="1105" y="580" font-size="12.5" fill="#6b7380" text-anchor="start" textLength="105.2" lengthAdjust="spacingAndGlyphs">Avg. Network Time</text>
<text x="1314" y="580" font-size="12.5" fill="#6b7380" text-anchor="start" textLength="83.4" lengthAdjust="spacingAndGlyphs">Pages / Minute</text>
<text x="66" y="871" font-size="13.5" fill="#333" text-anchor="start">Arcturus Applicare 9.2.5</text>
<text x="1088" y="871" font-size="13.5" fill="#333">Copyright © 2023&#160; <tspan fill="#2bb3c8">Arcturus Technologies, Inc.</tspan>&#160; |&#160; All Rights Reserved</text>
</svg>
</body></html>
